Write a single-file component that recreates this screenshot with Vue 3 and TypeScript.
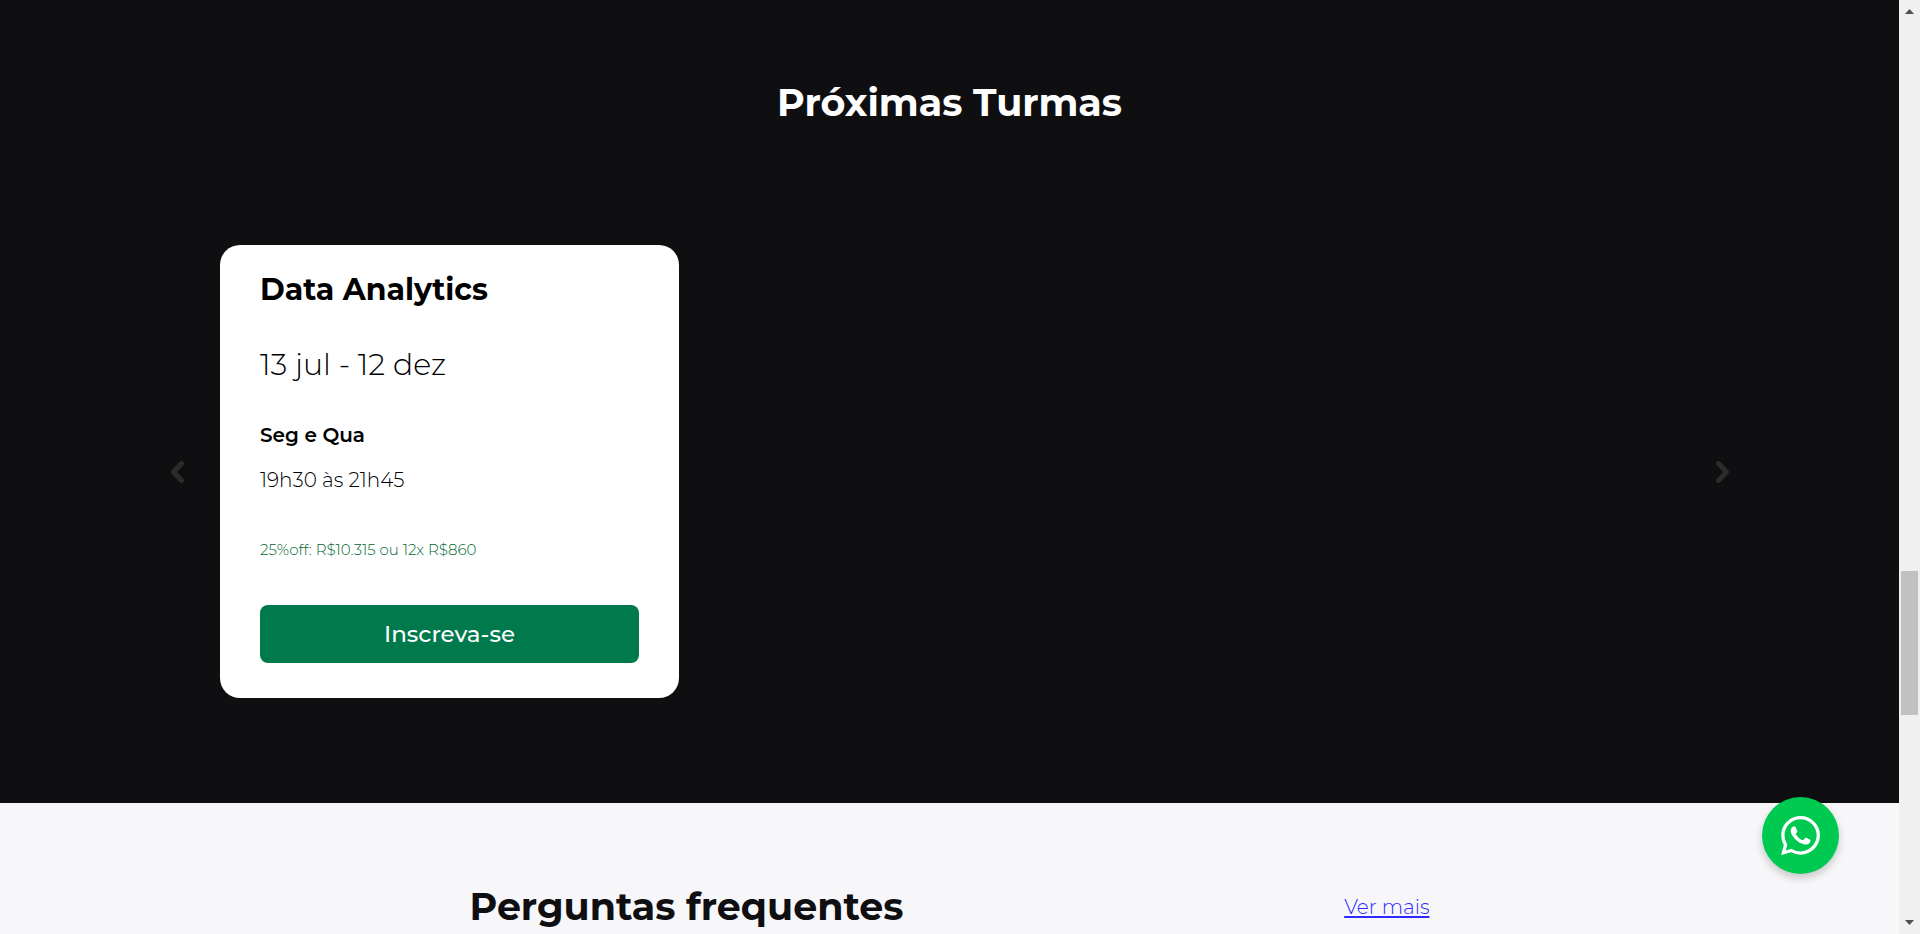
<script setup lang="ts">
interface Course {
  name: string
  period: string
  days: string
  hours: string
  offer: string
}

const courses: Course[] = [
  {
    name: 'Data Analytics',
    period: '13 jul - 12 dez',
    days: 'Seg e Qua',
    hours: '19h30 às 21h45',
    offer: '25%off: R$10.315 ou 12x R$860',
  },
]
</script>

<template>
  <div class="window">
    <main class="page">
      <section class="classes">
        <h2 class="heading">Próximas Turmas</h2>
        <div class="carousel">
          <button class="arrow" type="button" aria-label="Anterior" disabled>
            <svg width="14" height="22" viewBox="0 0 14 22"><path d="M11.5 2.5 L3.5 11 L11.5 19.5" /></svg>
          </button>
          <div class="slides">
            <article v-for="course in courses" :key="course.name" class="card">
              <h3 class="name">{{ course.name }}</h3>
              <p class="period">{{ course.period }}</p>
              <p class="days">{{ course.days }}</p>
              <p class="hours">{{ course.hours }}</p>
              <p class="offer">{{ course.offer }}</p>
              <button class="enroll" type="button">Inscreva-se</button>
            </article>
          </div>
          <button class="arrow" type="button" aria-label="Próximo" disabled>
            <svg width="14" height="22" viewBox="0 0 14 22"><path d="M3.5 2.5 L11.5 11 L3.5 19.5" /></svg>
          </button>
        </div>
      </section>
      <section class="faq">
        <div class="faq-head">
          <h2 class="heading">Perguntas frequentes</h2>
          <a class="more" href="#">Ver mais</a>
        </div>
      </section>
    </main>

    <div class="scrollbar" aria-hidden="true">
      <svg class="step" width="9" height="5" viewBox="0 0 9 5"><path d="M4.5 0 L9 5 H0 Z" /></svg>
      <div class="track"><div class="thumb"></div></div>
      <svg class="step" width="9" height="5" viewBox="0 0 9 5"><path d="M0 0 H9 L4.5 5 Z" /></svg>
    </div>

    <a class="whatsapp" href="#" aria-label="WhatsApp">
      <svg width="39" height="39" viewBox="0 0 24 24">
        <path
          d="M17.472 14.382c-.297-.149-1.758-.867-2.03-.967-.273-.099-.471-.148-.67.15-.197.297-.767.966-.94 1.164-.173.199-.347.223-.644.075-.297-.15-1.255-.463-2.39-1.475-.883-.788-1.48-1.761-1.653-2.059-.173-.297-.018-.458.13-.606.134-.133.298-.347.446-.52.149-.174.198-.298.298-.497.099-.198.05-.371-.025-.52-.075-.149-.669-1.612-.916-2.207-.242-.579-.487-.5-.669-.51-.173-.008-.371-.01-.57-.01-.198 0-.52.074-.792.372-.272.297-1.04 1.016-1.04 2.479 0 1.462 1.065 2.875 1.213 3.074.149.198 2.096 3.2 5.077 4.487.709.306 1.262.489 1.694.625.712.227 1.36.195 1.871.118.571-.085 1.758-.719 2.006-1.413.248-.694.248-1.289.173-1.413-.074-.124-.272-.198-.57-.347m-5.421 7.403h-.004a9.87 9.87 0 01-5.031-1.378l-.361-.214-3.741.982.998-3.648-.235-.374a9.86 9.86 0 01-1.51-5.26c.001-5.45 4.436-9.884 9.888-9.884 2.64 0 5.122 1.03 6.988 2.898a9.825 9.825 0 012.893 6.994c-.003 5.45-4.437 9.884-9.885 9.884m8.413-18.297A11.815 11.815 0 0012.05 0C5.495 0 .16 5.335.157 11.892c0 2.096.547 4.142 1.588 5.945L.057 24l6.305-1.654a11.882 11.882 0 005.683 1.448h.005c6.554 0 11.89-5.335 11.893-11.893a11.821 11.821 0 00-3.48-8.413Z"
        />
      </svg>
    </a>
  </div>
</template>

<style>
body {
  margin: 0;
}
</style>

<style scoped>
.window {
  display: flex;
  height: 100vh;
  overflow: hidden;
  font-family: Montserrat, Inter, "Liberation Sans", sans-serif;
  color: #000;
}
.page {
  flex: 1;
  min-width: 0;
  overflow: hidden;
  background: #f7f7fa;
}
h2,
h3,
p {
  margin: 0;
}
.heading {
  color: #0f0f11;
  font-size: 38px;
  line-height: 48px;
  font-weight: 700;
}
.classes {
  padding: 79px 160px 105px;
  background: #0f0f11;
}
.classes .heading {
  color: #fff;
  text-align: center;
}
.carousel {
  display: flex;
  align-items: center;
  margin-top: 118px;
}
.arrow {
  display: flex;
  flex: 0 0 60px;
  justify-content: flex-start;
  padding: 0 10px;
  border: 0;
  background: none;
}
.arrow:last-child {
  justify-content: flex-end;
}
.arrow path {
  fill: none;
  stroke: #2b2b2c;
  stroke-width: 5;
  stroke-linecap: round;
  stroke-linejoin: round;
}
.slides {
  display: grid;
  flex: 1;
  grid-template-columns: repeat(3, 1fr);
  gap: 41px;
}
.card {
  display: flex;
  flex-direction: column;
  padding: 25px 40px 35px;
  border-radius: 20px;
  background: #fff;
}
.name {
  font-size: 30px;
  line-height: 40px;
  font-weight: 700;
}
.period {
  margin-top: 35px;
  font-size: 30px;
  line-height: 40px;
  font-weight: 300;
}
.days {
  margin-top: 38px;
  font-size: 20px;
  line-height: 24px;
  font-weight: 600;
}
.hours {
  margin-top: 21px;
  font-size: 20px;
  line-height: 24px;
  font-weight: 300;
}
.offer {
  margin-top: 48px;
  font-size: 15px;
  line-height: 20px;
  font-weight: 300;
  color: #00662f;
}
.enroll {
  height: 58px;
  margin-top: 45px;
  border: 0;
  border-radius: 8px;
  background: #007a4d;
  color: #fff;
  font-family: inherit;
  font-size: 23px;
  font-weight: 500;
}
.faq {
  padding: 80px 40px;
}
.faq-head {
  display: flex;
  align-items: center;
  justify-content: space-between;
  max-width: 960px;
  margin: 0 auto;
}
.more {
  color: #2b2bff;
  font-size: 20px;
  line-height: 24px;
  font-weight: 300;
  text-decoration-thickness: 2px;
  text-underline-offset: 2px;
  text-decoration-skip-ink: none;
}
.scrollbar {
  display: flex;
  flex: 0 0 21px;
  flex-direction: column;
  align-items: center;
  box-sizing: border-box;
  padding: 9px 2px;
  background: #f0f0f0;
}
.step {
  flex: none;
  fill: #505050;
}
.track {
  display: flex;
  flex: 1;
  align-self: stretch;
  flex-direction: column;
  padding-top: 557px;
}
.thumb {
  height: 144px;
  background: #c1c1c1;
}
.whatsapp {
  position: fixed;
  right: 81px;
  bottom: 60px;
  display: grid;
  place-items: center;
  width: 77px;
  height: 77px;
  border-radius: 50%;
  background: #00c951;
  box-shadow: 0 4px 8px rgba(0, 0, 0, 0.2);
}
.whatsapp svg {
  fill: #fff;
}
</style>
